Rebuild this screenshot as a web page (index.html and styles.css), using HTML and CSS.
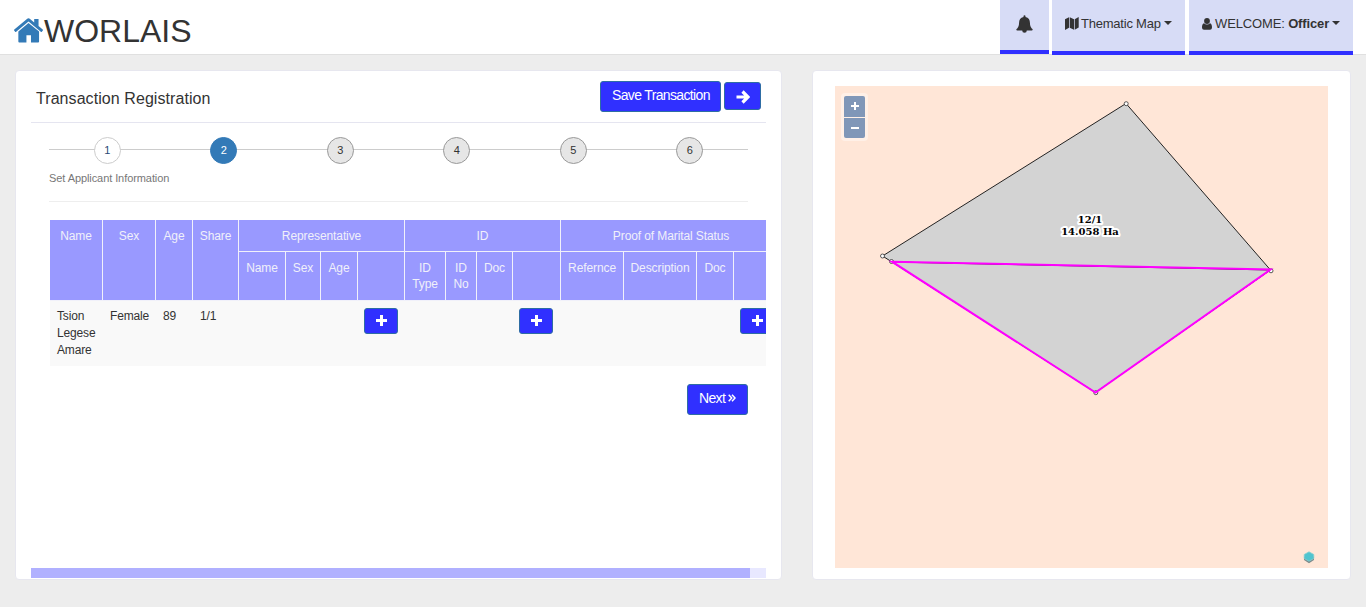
FILE: index.html
```html
<!DOCTYPE html>
<html lang="en">
<head>
<meta charset="utf-8">
<title>WORLAIS</title>
<link rel="stylesheet" href="styles.css">
</head>
<body>
<header class="topbar">
  <div class="brand">
    <svg class="brand-icon" viewBox="0 0 28 24"><path d="M14 4.800 4.200 13v9.600q0 .9.9.9H12v-7h4.400v7h6.900q.9 0 .9-.9V13z"/><path d="M14 .2q.8 0 1.500.6l4 3.400V.9h4.200v6.800l4 3.400q.6.500.1 1l-.9 1q-.5.500-1 .1L14 3.400 2.100 13.200q-.5.400-1-.1l-.9-1q-.5-.5.1-1L12.500.8q.7-.6 1.500-.6z"/></svg>
    <span>WORLAIS</span>
  </div>
  <nav class="nav">
    <a class="nav-item nav-bell"><svg width="17" height="18" viewBox="0 0 17 18"><path d="M7.500 1.200a1 1 0 0 1 2 0v.8c3.200.6 4.400 3 4.400 5.500 0 3.700 1.200 5.600 2.800 6.800 0 .8-.5 1.200-1.200 1.200h-4.700a2.300 2.300 0 0 1-4.600 0H1.500c-.7 0-1.200-.4-1.200-1.200 1.600-1.200 2.800-3.100 2.800-6.800 0-2.500 1.200-4.900 4.400-5.500z"/></svg></a>
    <a class="nav-item nav-map"><svg width="14" height="13" viewBox="0 0 14 13"><path d="M0 2.300 4 .2v10.500L0 12.900zM4.700.2l4.300 2v10.600l-4.300-2.100zM9.700 2.200 13.700.1v10.500l-4 2.200z"/></svg><span>Thematic Map</span><i class="caret"></i></a>
    <a class="nav-item nav-user"><svg width="10" height="12" viewBox="0 0 10 12"><circle cx="5" cy="3" r="2.900"/><path d="M2 5.300c-1.500.4-2 2.200-2 4C0 11 .9 11.800 2 11.800h6c1.100 0 2-.8 2-2.500 0-1.800-.5-3.600-2-4-1.700 1.600-4.300 1.600-6 0z"/></svg><span>WELCOME: <b>Officer</b></span><i class="caret"></i></a>
  </nav>
</header>

<main class="content">
  <section class="panel form-panel">
    <div class="panel-head">
      <h1 class="title">Transaction Registration</h1>
      <div class="actions">
        <button class="btn btn-save">Save Transaction</button>
        <button class="btn btn-go"><svg width="14" height="14" viewBox="0 0 14 14"><path d="M.5 7h11M6.500 1.500 12 7l-5.500 5.500"/></svg></button>
      </div>
    </div>
    <ol class="steps">
      <li><span class="dot done">1</span></li>
      <li><span class="dot current">2</span></li>
      <li><span class="dot">3</span></li>
      <li><span class="dot">4</span></li>
      <li><span class="dot">5</span></li>
      <li><span class="dot">6</span></li>
    </ol>
    <p class="step-label">Set Applicant Information</p>
    <div class="table-clip">
      <table class="grid">
        <colgroup><col class="w53"><col class="w53"><col class="w37"><col class="w46"><col class="w47"><col class="w35"><col class="w37"><col class="w47"><col class="w41"><col class="w31"><col class="w36"><col class="w48"><col class="w63"><col class="w73"><col class="w37"><col class="w48"></colgroup>
        <thead>
          <tr class="r1"><th rowspan="2">Name</th><th rowspan="2">Sex</th><th rowspan="2">Age</th><th rowspan="2">Share</th><th colspan="4">Representative</th><th colspan="4">ID</th><th colspan="4">Proof of Marital Status</th></tr>
          <tr class="r2"><th>Name</th><th>Sex</th><th>Age</th><th></th><th>ID Type</th><th>ID No</th><th>Doc</th><th></th><th>Refernce</th><th>Description</th><th>Doc</th><th></th></tr>
        </thead>
        <tbody>
          <tr><td>Tsion Legese Amare</td><td>Female</td><td>89</td><td>1/1</td><td></td><td></td><td></td>
            <td><button class="btn btn-add"><svg width="11" height="11" viewBox="0 0 11 11"><path d="M4 0h3v4h4v3H7v4H4V7H0V4h4z"/></svg></button></td>
            <td></td><td></td><td></td>
            <td><button class="btn btn-add"><svg width="11" height="11" viewBox="0 0 11 11"><path d="M4 0h3v4h4v3H7v4H4V7H0V4h4z"/></svg></button></td>
            <td></td><td></td><td></td>
            <td><button class="btn btn-add"><svg width="11" height="11" viewBox="0 0 11 11"><path d="M4 0h3v4h4v3H7v4H4V7H0V4h4z"/></svg></button></td></tr>
        </tbody>
      </table>
    </div>
    <div class="next-row"><button class="btn btn-next"><span>Next</span><svg width="8" height="8" viewBox="0 0 8 8"><path d="M.7.700 3.700 4 .7 7.300M4 .7 7 4 4 7.300"/></svg></button></div>
    <div class="scroll"><div class="thumb"></div></div>
  </section>

  <section class="panel map-panel">
    <div class="map">
      <svg class="parcels" width="493" height="482" viewBox="835 86 493 482">
        <path class="parcel" d="M1126 103.500 1270.500 270 892 262 882.500 256z"/>
        <path class="parcel" d="M892 262 1270.500 270 1095.500 392.500z"/>
        <g class="vertex"><circle cx="1126.200" cy="103.700" r="2"/><circle cx="882.500" cy="256" r="2"/><circle cx="891.500" cy="261.500" r="2"/><circle cx="1271" cy="270.800" r="2"/><circle cx="1095.800" cy="392.700" r="2"/></g>
        <path class="selected" d="M892 261.700 1270.500 269.500 1095.500 392.500z"/>
        <g class="label"><text x="1090" y="222.700">12/1</text><text x="1090" y="234.700">14.058 Ha</text></g>
        <path fill="#7b8a8c" d="m1309 554 5 3v3l-5 3.200-5-3.200v-3z"/>
        <path fill="#50c4cf" stroke="#8bcfcf" stroke-width=".8" d="m1309 551.800 4.800 2.700v4l-4.800 2.700-4.800-2.700v-4z"/>
      </svg>
      <div class="zoom"><button><svg width="10" height="10" viewBox="0 0 10 10"><path d="M4 0h2v3h3v2H6v3H4V5H1V3h3z"/></svg></button><button><svg width="10" height="10" viewBox="0 0 10 10"><path d="M1 4h8v2H1z"/></svg></button></div>
    </div>
  </section>
</main>
</body>
</html>
```
FILE: styles.css
```css
* { box-sizing: border-box; }
body { margin: 0; height: 607px; overflow: hidden; background: #ededed; color: #333; font: 12px/17px "Liberation Sans", Arial, sans-serif; }
.topbar { display: flex; justify-content: space-between; height: 55px; background: #fff; border-bottom: 1px solid #e0e0e0; }
.brand { display: flex; padding: 13px 0 0 14px; font-size: 32px; line-height: 36px; }
.brand-icon { width: 29px; height: 25px; margin: 5px 1px 0 0; fill: #337ab7; }
.nav { display: flex; height: 55px; padding-right: 13px; }
.nav-item { display: flex; height: 55px; padding-top: 15px; background: #d7dcf6; border-bottom: 4px solid #3030ff; line-height: 17px; white-space: nowrap; }
.nav-item svg { flex: none; fill: #333; }
.nav-bell { width: 49px; height: 54px; margin-right: 3px; padding-left: 16px; }
.nav-map { width: 133px; margin-right: 4px; padding-left: 13px; }
.nav-map svg { margin: 2px 2px 0 0; }
.nav-user { width: 164px; padding-left: 13px; }
.nav-user svg { margin: 3px 3px 0 0; }
.nav-map span { width: 80px; font-size: 13px; letter-spacing: -.22px; }
.nav-user span { width: 114px; font-size: 13px; letter-spacing: -.14px; }
.caret { width: 8px; height: 4px; margin: 6px 0 0 3px; border: 4px solid transparent; border-top-color: #333; border-bottom: 0; }
.content { display: flex; gap: 30px; padding: 15px 15px 0; }
.panel { height: 510px; background: #fff; border: 1px solid #e7e7ef; border-radius: 4px; }
.form-panel { display: flex; flex-direction: column; width: 767px; padding: 0 15px; }
.panel-head { display: flex; justify-content: space-between; height: 52px; padding: 10px 5px 0; border-bottom: 1px solid #e5e5f0; }
.title { margin: 9px 0 0; font-size: 16px; font-weight: 400; line-height: 18px; letter-spacing: .07px; }
.actions { display: flex; gap: 3px; }
.btn { display: flex; padding: 0; background: #3030ff; border: 1px solid #2e6da4; border-radius: 3px; color: #fff; font: 14px/16px "Liberation Sans", Arial, sans-serif; letter-spacing: -.65px; }
.btn-save { width: 121px; height: 31px; padding: 5px 0 0 11px; white-space: nowrap; }
.btn-go { width: 37px; height: 28px; margin-top: 1px; align-items: center; justify-content: center; padding-top: 2px; }
.btn-go svg { fill: none; stroke: #fff; stroke-width: 3.200; }
.steps { display: flex; height: 41px; margin: 14px 18px 0; padding: 0; list-style: none; background: linear-gradient(#ccc, #ccc) 0 12px / 100% 1px no-repeat; }
.steps li { display: flex; flex: 1; justify-content: center; }
.dot { width: 27px; height: 27px; background: #e6e6e6; border: 1px solid #999; border-radius: 50%; color: #333; font-size: 11px; line-height: 25px; text-align: center; }
.dot.done { background: #fff; border-color: #ccc; color: #2a4a75; }
.dot.current { background: #337ab7; border-color: #337ab7; color: #fff; }
.step-label { height: 32px; margin: -8px 18px 18px; border-bottom: 1px solid #eee; color: #777; font-size: 11px; line-height: 16px; letter-spacing: -.08px; }
.table-clip { height: 146px; margin-left: 18px; padding-left: 1px; overflow: hidden; }
.grid { width: 732px; border-collapse: separate; border-spacing: 0; table-layout: fixed; }
.grid th { padding: 8px 6px 0; background: #9999ff; border: solid #f1f1fa; border-width: 0 1px 1px 0; color: #f0f0fa; font-weight: 400; line-height: 16px; text-align: center; vertical-align: top; letter-spacing: -.1px; }
.r1 { height: 32px; }
.r2 { height: 49px; }
.grid td { height: 65px; padding: 7px 7px 0; background: #f9f9f9; vertical-align: top; letter-spacing: -.15px; }
.w31 { width: 31px; }
.w35 { width: 35px; }
.w36 { width: 36px; }
.w37 { width: 37px; }
.w41 { width: 41px; }
.w46 { width: 46px; }
.w47 { width: 47px; }
.w48 { width: 48px; }
.w53 { width: 53px; }
.w63 { width: 63px; }
.w73 { width: 73px; }
.btn-add { width: 34px; height: 26px; margin-left: -1px; padding: 6px 0 0 11px; }
.btn-add svg, .zoom svg { fill: #fff; }
.next-row { display: flex; justify-content: flex-end; margin: 18px 18px 0 0; }
.btn-next { width: 61px; height: 31px; padding: 5px 0 0 11px; }
.btn-next svg { margin: 4px 0 0 3px; fill: none; stroke: #fff; stroke-width: 1.500; }
.scroll { height: 10px; margin: auto 0 1px; background: #e8e8ff; }
.thumb { width: 719px; height: 10px; background: #b0b0ff; }
.map-panel { width: 539px; padding: 15px 22px; }
.map { position: relative; width: 493px; height: 482px; background: #ffe6d7; }
.parcels { display: block; }
.parcel { fill: #d3d3d3; stroke: #222; stroke-width: 1; }
.vertex { fill: #fff; stroke: #333; stroke-width: .8; }
.selected { fill: none; stroke: #f0f; stroke-width: 2; }
.label { fill: #000; stroke: #fff; stroke-width: 4px; stroke-linejoin: round; paint-order: stroke; font: bold 10px "DejaVu Serif", serif; text-anchor: middle; }
.zoom { position: absolute; top: 7px; left: 6px; display: grid; gap: 1px; padding: 3px; background: rgba(255, 255, 255, .4); border-radius: 4px; }
.zoom button { display: flex; align-items: center; justify-content: center; width: 21px; height: 21px; padding: 0; background: #8097b8; border: 0; border-radius: 2px 2px 0 0; }
.zoom button + button { height: 20px; border-radius: 0 0 2px 2px; }
```
